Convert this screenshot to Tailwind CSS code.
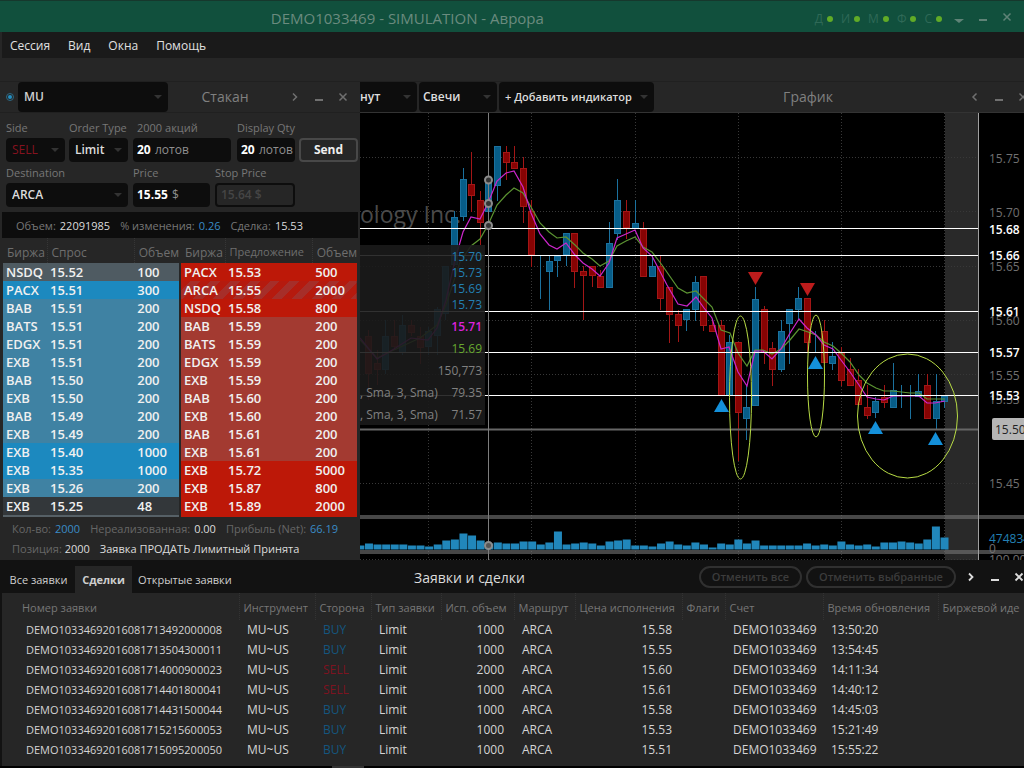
<!DOCTYPE html>
<html lang="ru">
<head>
    <meta charset="UTF-8">
    <meta name="viewport" content="width=device-width, initial-scale=1.0">
    <script src="https://cdn.jsdelivr.net/npm/@tailwindcss/browser@4"></script>
    <title>Аврора</title>
</head>
<body class="flex h-screen min-h-[768px] flex-col overflow-hidden bg-[#262626] font-['Open_Sans','Noto_Sans',sans-serif] text-xs text-[#cfcfcf]">
    <!-- Title bar -->
    <header class="flex h-8 shrink-0 items-center border-t border-[#16382d] bg-[#11503d] pr-3 text-[#527a6c]">
        <h1 class="flex-1 pt-0.5 text-center text-[15px] text-[#6b8b7f]">DEMO1033469 - SIMULATION - Аврора</h1>
        <ul class="flex items-center gap-2 pt-1 pr-3 text-xs text-[#2f6957]">
            <li class="flex items-center gap-1">Д<span class="size-1.5 rounded-full bg-[#61ab27]"></span></li>
            <li class="flex items-center gap-1">И<span class="size-1.5 rounded-full bg-[#61ab27]"></span></li>
            <li class="flex items-center gap-1">М<span class="size-1.5 rounded-full bg-[#61ab27]"></span></li>
            <li class="flex items-center gap-1">Ф<span class="size-1.5 rounded-full bg-[#61ab27]"></span></li>
            <li class="flex items-center gap-1">С<span class="size-1.5 rounded-full bg-[#61ab27]"></span></li>
        </ul>
        <div class="flex items-center gap-3.5 text-[#5f8377]">
            <button aria-label="Меню"><svg class="h-3 w-2.5" viewBox="0 0 10 12" fill="currentColor"><path d="M0 8h10l-5 4z"/></svg></button>
            <button aria-label="Свернуть"><svg class="h-3 w-2.5" viewBox="0 0 10 12" fill="currentColor"><path d="M1 8h8v2H1z"/></svg></button>
            <button aria-label="Закрыть"><svg class="h-3 w-2.5" viewBox="0 0 10 12" fill="none" stroke="currentColor" stroke-width="1.5"><path d="M1.500 2.500l7 7m0-7l-7 7"/></svg></button>
        </div>
    </header>

    <!-- Menu -->
    <nav class="ml-0.5 flex h-[26px] shrink-0 items-center gap-[18px] bg-[#1a1a1a] px-2 pt-0.5 text-xs text-[#e0e0e0]">
        <a href="#">Сессия</a>
        <a href="#">Вид</a>
        <a href="#">Окна</a>
        <a href="#">Помощь</a>
    </nav>
    <div class="h-6 shrink-0 border-b border-[#202020]"></div>

    <main class="flex min-h-0 flex-1">
        <!-- Order book -->
        <section class="flex w-[360px] shrink-0 flex-col">
            <div class="flex h-[31px] shrink-0 items-center border-b border-[#202020] pr-3 pl-1.5">
                <svg class="mr-1 size-2" viewBox="0 0 8 8"><circle cx="4" cy="4" r="3.500" fill="none" stroke="#2d6680"/><circle cx="4" cy="4" r="2" fill="#2390c4"/></svg>
                <label class="flex h-[30px] w-[150px] items-center rounded bg-[#0d0d0d] px-1.5">
                    <select aria-label="Инструмент" class="min-w-0 flex-1 appearance-none bg-transparent font-semibold outline-none"><option>MU</option></select>
                    <svg class="h-1 w-2" viewBox="0 0 8 4" fill="#333"><path d="M0 0h8L4 4z"/></svg>
                </label>
                <h2 class="flex-1 pr-2 text-center text-sm text-[#808080]">Стакан</h2>
                <div class="flex gap-3.5 text-[#707070]">
                    <button aria-label="Вперед"><svg class="size-2.5" viewBox="0 0 10 10" fill="none" stroke="currentColor" stroke-width="1.5"><path d="M3 1.500L6.500 5 3 8.500"/></svg></button>
                    <button aria-label="Свернуть"><svg class="size-2.5" viewBox="0 0 10 10" fill="currentColor"><path d="M1 7h8v2H1z"/></svg></button>
                    <button aria-label="Закрыть"><svg class="size-2.5" viewBox="0 0 10 10" fill="none" stroke="currentColor" stroke-width="1.5"><path d="M1.500 1.500l7 7m0-7l-7 7"/></svg></button>
                </div>
            </div>

            <form class="flex shrink-0 flex-col pt-[7px] pr-0.5 pl-1.5 text-[11px] leading-4 text-[#777]">
                <div class="flex items-end">
                    <label class="w-[63px] shrink-0">Side
                        <span class="mt-0.5 flex h-6 w-[59px] items-center rounded bg-[#0d0d0d] px-1.5">
                            <select class="min-w-0 flex-1 appearance-none text-xs text-[#85121f] outline-none"><option>SELL</option></select>
                            <svg class="h-1 w-2" viewBox="0 0 8 4" fill="#333"><path d="M0 0h8L4 4z"/></svg>
                        </span>
                    </label>
                    <label class="w-16 shrink-0">Order Type
                        <span class="mt-0.5 flex h-6 w-[59px] items-center rounded bg-[#0d0d0d] px-1.5">
                            <select class="min-w-0 flex-1 appearance-none text-xs font-semibold text-[#dcdcdc] outline-none"><option>Limit</option></select>
                            <svg class="h-1 w-2" viewBox="0 0 8 4" fill="#333"><path d="M0 0h8L4 4z"/></svg>
                        </span>
                    </label>
                    <label class="w-[104px] shrink-0"><span class="pl-1">2000 акций</span>
                        <span class="mt-0.5 flex h-6 w-[98px] items-center gap-1 rounded bg-[#0d0d0d] px-1 text-xs text-[#909090]">
                            <input value="20" class="w-3.5 font-bold text-white outline-none">лотов
                        </span>
                    </label>
                    <label class="w-[62px] shrink-0">Display Qty
                        <span class="mt-0.5 flex h-6 w-[58px] items-center gap-1 overflow-hidden rounded bg-[#0d0d0d] pl-1 text-xs text-[#909090]">
                            <input value="20" class="w-3.5 shrink-0 font-bold text-white outline-none">лотов
                        </span>
                    </label>
                    <button type="button" class="h-6 w-[59px] shrink-0 rounded border-2 border-[#484848] text-xs font-bold text-[#eee]">Send</button>
                </div>
                <div class="flex items-end pt-[3px]">
                    <label class="w-[127px]">Destination
                        <span class="mt-0.5 flex h-6 w-[122px] items-center rounded bg-[#0d0d0d] px-1.5">
                            <select class="min-w-0 flex-1 appearance-none text-xs font-semibold text-[#dcdcdc] outline-none"><option>ARCA</option></select>
                            <svg class="h-1 w-2" viewBox="0 0 8 4" fill="#333"><path d="M0 0h8L4 4z"/></svg>
                        </span>
                    </label>
                    <label class="w-[82px]">Price
                        <span class="mt-0.5 flex h-6 w-[77px] items-center gap-1 rounded bg-[#0d0d0d] px-1 text-xs text-[#909090]">
                            <input value="15.55" class="w-[31px] font-bold text-white outline-none">$
                        </span>
                    </label>
                    <label>Stop Price
                        <span class="mt-0.5 flex h-6 w-20 items-center rounded border-2 border-[#0d0d0d] px-1">
                            <input disabled value="15.64 $" class="w-full text-xs font-semibold text-[#454545]">
                        </span>
                    </label>
                </div>
            </form>

            <dl class="mx-0.5 mt-[5px] flex h-[26px] shrink-0 items-center gap-2.5 bg-[#0d0d0d] pt-0.5 pl-3.5 text-[11px] text-[#777]">
                <div class="flex gap-1"><dt>Объем:</dt><dd class="text-[#dcdcdc]">22091985</dd></div>
                <div class="flex gap-1"><dt>% изменения:</dt><dd class="text-[#3a8cc6]">0.26</dd></div>
                <div class="flex gap-1"><dt>Сделка:</dt><dd class="text-[#dcdcdc]">15.53</dd></div>
            </dl>

            <div class="flex gap-0.5 px-[3px]">
                <table class="h-fit flex-1 table-fixed border-b-2 border-[#566066] text-[13px] font-semibold text-[#f0f0f0]">
                    <thead class="h-[25px] text-left text-xs text-[#6e6e6e]">
                        <tr>
                            <th class="w-11 overflow-hidden pt-1 pl-1 font-normal whitespace-nowrap">Биржа</th>
                            <th class="border-l border-dotted border-[#363636] pt-1 pl-1 font-normal">Спрос</th>
                            <th class="w-11 overflow-hidden border-l border-dotted border-[#363636] pt-1 pl-1 font-normal whitespace-nowrap">Объем</th>
                        </tr>
                    </thead>
                    <tbody id="bids"></tbody>
                </table>
                <table class="h-fit flex-1 table-fixed border-b-2 border-[#bd1808] text-[13px] font-semibold text-[#f0f0f0]">
                    <thead class="h-[25px] text-left text-xs text-[#6e6e6e]">
                        <tr>
                            <th class="w-11 overflow-hidden pt-1 pl-1 font-normal whitespace-nowrap">Биржа</th>
                            <th class="border-l border-dotted border-[#363636] pt-1 pl-1 text-[11px] font-normal">Предложение</th>
                            <th class="w-11 overflow-hidden border-l border-dotted border-[#363636] pt-1 pl-1 font-normal whitespace-nowrap">Объем</th>
                        </tr>
                    </thead>
                    <tbody id="asks"></tbody>
                </table>
            </div>

            <div class="pt-0.5 pl-3 text-[11px] leading-5 whitespace-nowrap text-[#666]">
                <dl class="flex gap-2.5">
                    <div class="flex gap-1"><dt>Кол-во:</dt><dd class="text-[#3a8cc6]">2000</dd></div>
                    <div class="flex gap-1"><dt>Нереализованная:</dt><dd class="text-[#dcdcdc]">0.00</dd></div>
                    <div class="flex gap-1"><dt>Прибыль (Net):</dt><dd class="text-[#3a8cc6]">66.19</dd></div>
                </dl>
                <div class="flex gap-2.5">
                    <p>Позиция: <span class="text-[#dcdcdc]">2000</span></p>
                    <p class="text-[#dcdcdc]">Заявка ПРОДАТЬ Лимитный Принята</p>
                </div>
            </div>
        </section>

        <!-- Chart -->
        <section class="flex min-w-0 flex-1 flex-col bg-black">
            <div class="flex h-[31px] shrink-0 items-center gap-0.5 overflow-hidden border-b border-[#333] bg-[#262626] font-semibold text-[#dcdcdc]">
                <label class="flex h-[30px] w-[57px] shrink-0 items-center rounded-r bg-[#0d0d0d] pr-1.5">
                    <select aria-label="Интервал" class="min-w-0 flex-1 appearance-none outline-none"><option>нут</option></select>
                    <svg class="h-1 w-2" viewBox="0 0 8 4" fill="#333"><path d="M0 0h8L4 4z"/></svg>
                </label>
                <label class="flex h-[30px] w-[78px] shrink-0 items-center rounded bg-[#0d0d0d] pr-1.5 pl-1">
                    <select aria-label="Тип графика" class="min-w-0 flex-1 appearance-none outline-none"><option>Свечи</option></select>
                    <svg class="h-1 w-2" viewBox="0 0 8 4" fill="#333"><path d="M0 0h8L4 4z"/></svg>
                </label>
                <button class="flex h-[30px] w-[155px] shrink-0 items-center justify-between rounded bg-[#0d0d0d] px-1.5 text-[11px] whitespace-nowrap">
                    + Добавить индикатор
                    <svg class="h-1 w-2" viewBox="0 0 8 4" fill="#333"><path d="M0 0h8L4 4z"/></svg>
                </button>
                <h2 class="flex-1 pr-2 text-center text-sm font-normal text-[#808080]">График</h2>
                <div class="-mr-1 flex shrink-0 gap-3.5 text-[#707070]">
                    <button aria-label="Назад"><svg class="size-2.5" viewBox="0 0 10 10" fill="none" stroke="currentColor" stroke-width="1.5"><path d="M6.500 1.500L3 5l3.500 3.500"/></svg></button>
                    <button aria-label="Свернуть"><svg class="size-2.5" viewBox="0 0 10 10" fill="currentColor"><path d="M1 7h8v2H1z"/></svg></button>
                    <button aria-label="Закрыть"><svg class="size-2.5" viewBox="0 0 10 10" fill="none" stroke="currentColor" stroke-width="1.5"><path d="M1.500 1.500l7 7m0-7l-7 7"/></svg></button>
                </div>
            </div>
            <svg class="block min-h-0 w-full flex-1" viewBox="360 113 664 447" preserveAspectRatio="xMinYMin slice" font-size="12">
                <rect x="945" y="113" width="34" height="447" fill="#292929"/>
                <g id="grid" stroke="#383838" stroke-dasharray="1 2"></g>
                <text x="360" y="223" font-size="23" fill="#4a4a4a">ology Inc.</text>
                <g id="candles"></g>
                <g fill="none" stroke-width="1.2">
                    <path stroke="#5c9432" d="M360 340L377 358L394 350L420 338L437 325L446 305L460 262L471 246L480 239L488 225L497 205L506 195L514 188L523 193L531 207L540 223L549 232L557 238L566 237L575 245L583 253L592 259L600 266L609 261L617 246L626 241L635 237L643 247L652 252L662 265L678 288L687 293L696 291L712 307L721 330L730 333L738 353L747 366L755 350L763 350L772 354L781 349L790 340L799 329L808 332L816 335L824 342L833 346L841 353L850 362L859 375L867 383L876 388L884 391L893 391L910 393L919 393L927 399L945 399"/>
                    <path stroke="#cc26cc" d="M360 338L377 359L394 349L411 338L428 340L437 328L446 300L455 260L463 232L471 217L480 219L488 203L497 181L506 173L514 171L523 187L531 213L540 234L549 245L557 249L566 243L575 255L583 263L592 269L600 276L609 263L617 238L626 234L635 230L643 248L652 256L667 285L678 304L687 306L696 297L704 308L712 318L721 349L729 347L738 372L747 386L755 351L763 351L772 359L781 349L790 333L799 319L807 328L816 335L824 345L833 349L841 360L850 372L859 385L867 397L876 399L884 400L893 396L919 396L927 403L935 403L945 401"/>
                </g>
                <path stroke="#666" stroke-width="2" d="M360 429.500H979"/>
                <path stroke="#fff" d="M360 228.500H979M360 255.500H979M360 311.500H979M360 352.500H979M360 395.500H979"/>
                <path stroke="#7d7d7d" d="M488.500 113V560"/>
                <g fill="#333" stroke="#8c8c8c" stroke-width="2">
                    <circle cx="488.500" cy="180" r="3.500"/>
                    <circle cx="488.500" cy="203.500" r="3.500"/>
                    <circle cx="488.500" cy="225.500" r="3.500"/>
                </g>
                <!-- Values under the cursor -->
                <rect x="360" y="245" width="125" height="180" fill="#1b1b1b" fill-opacity=".9"/>
                <g text-anchor="end" fill="#2380b4">
                    <text x="482" y="261">15.70</text>
                    <text x="482" y="277">15.73</text>
                    <text x="482" y="293">15.69</text>
                    <text x="482" y="309">15.73</text>
                    <text x="482" y="331" fill="#dd22dd" font-weight="600">15.71</text>
                    <text x="482" y="353" fill="#67a82f">15.69</text>
                    <text x="482" y="375" fill="#808080">150,773</text>
                    <text x="482" y="397" fill="#808080">79.35</text>
                    <text x="482" y="419" fill="#808080">71.57</text>
                </g>
                <g fill="#808080">
                    <text x="360" y="397">, Sma, 3, Sma)</text>
                    <text x="360" y="419">, Sma, 3, Sma)</text>
                </g>
                <g fill="#1490da">
                    <path d="M714 412h15l-7.500-13z"/>
                    <path d="M808 369h15l-7.500-13z"/>
                    <path d="M868 434h15l-7.500-13z"/>
                    <path d="M928 445h15l-7.500-13z"/>
                </g>
                <g fill="#bd1c1c">
                    <path d="M748 272h15l-7.500 13z"/>
                    <path d="M800 283h15l-7.500 13z"/>
                </g>
                <g fill="none" stroke="#b8dc45">
                    <ellipse cx="740.500" cy="397.500" rx="11" ry="81.500"/>
                    <ellipse cx="816" cy="376" rx="8.500" ry="61"/>
                    <ellipse cx="907.500" cy="416" rx="50" ry="62"/>
                </g>
                <g id="volume" fill="#2187bb"></g>
                <circle cx="488.500" cy="545.500" r="3.500" fill="#555" stroke="#8c8c8c" stroke-width="2"/>
                <path fill="#777" fill-opacity=".6" d="M360 515h664v4H360zM360 550h664v4H360z"/>
                <path stroke="#a0a0a0" d="M978.500 113V560"/>
                <!-- Price axis -->
                <g fill="#707070">
                    <text x="989" y="163">15.75</text>
                    <text x="989" y="217">15.70</text>
                    <text x="989" y="271">15.65</text>
                    <text x="989" y="325">15.60</text>
                    <text x="989" y="380">15.55</text>
                    <text x="989" y="404">15.53</text>
                    <text x="989" y="488">15.45</text>
                    <text x="989" y="543" fill="#2380b4">474834</text>
                    <text x="989" y="553">0</text>
                    <text x="989" y="564">100.00</text>
                </g>
                <g fill="#fff" font-weight="600">
                    <text x="989" y="234">15.68</text>
                    <text x="989" y="260">15.66</text>
                    <text x="989" y="316">15.61</text>
                    <text x="989" y="357">15.57</text>
                    <text x="989" y="400">15.53</text>
                </g>
                <rect x="992" y="418" width="36" height="22" rx="2" fill="#b5b5b5"/>
                <text x="995" y="434" fill="#222">15.50</text>
            </svg>
        </section>
    </main>

    <!-- Orders and trades -->
    <section class="relative shrink-0 border-b-2 border-black bg-[#121212] pl-0.5">
        <div class="flex h-[33px] items-end overflow-hidden">
            <div class="flex w-[300px] shrink-0">
                <button class="h-[27px] w-[73px] pt-0.5 text-[11px] whitespace-nowrap">Все заявки</button>
                <button class="h-[27px] w-[57px] bg-[#262626] pt-0.5 text-[11px] font-bold">Сделки</button>
                <button class="h-[27px] px-1.5 pt-0.5 text-[11px] whitespace-nowrap">Открытые заявки</button>
            </div>
            <h2 class="h-[27px] flex-1 pt-0.5 pr-1.5 pl-10 text-center text-sm whitespace-nowrap text-[#dcdcdc]">Заявки и сделки</h2>
            <div class="flex h-[33px] shrink-0 items-center gap-1 pl-24">
                <button disabled class="h-[22px] w-[103px] rounded-full border-2 border-[#303030] text-[11px] leading-none font-semibold text-[#3c3c3c]">Отменить все</button>
                <button disabled class="h-[22px] w-[150px] rounded-full border-2 border-[#303030] text-[11px] leading-none font-semibold whitespace-nowrap text-[#3c3c3c]">Отменить выбранные</button>
                <div class="flex gap-3.5 pl-1.5 text-[#dcdcdc]">
                    <button aria-label="Вперед"><svg class="size-2.5" viewBox="0 0 10 10" fill="none" stroke="currentColor" stroke-width="1.8"><path d="M3 1.500L6.500 5 3 8.500"/></svg></button>
                    <button aria-label="Свернуть"><svg class="size-2.5" viewBox="0 0 10 10" fill="currentColor"><path d="M1 7h8v2H1z"/></svg></button>
                    <button aria-label="Закрыть"><svg class="size-2.5" viewBox="0 0 10 10" fill="none" stroke="currentColor" stroke-width="1.8"><path d="M1.500 1.500l7 7m0-7l-7 7"/></svg></button>
                </div>
            </div>
        </div>
        <div class="overflow-hidden bg-[#262626] pr-1 pb-1.5 pl-4">
            <table class="w-full table-fixed whitespace-nowrap">
                <colgroup>
                    <col class="w-[221px]"><col class="w-[76px]"><col class="w-[56px]"><col class="w-[70px]">
                    <col class="w-[73px]"><col class="w-[61px]"><col class="w-[107px]"><col class="w-[43px]">
                    <col class="w-[98px]"><col class="w-[115px]"><col>
                </colgroup>
                <thead class="h-[27px] text-left text-[11px] text-[#777]">
                    <tr id="trade-head"></tr>
                </thead>
                <tbody id="trades" class="text-xs text-[#d4d4d4]"></tbody>
            </table>
        </div>
        <div class="absolute -bottom-0.5 left-[332px] h-0.5 w-8 bg-[#333]"></div>
    </section>

    <script>
        // Order book
        const levels = {
            grey: 'bg-[#4f5b62]',
            dark: 'bg-[#33373a]',
            blue: 'bg-[#3f82a3]',
            brightBlue: 'bg-[#1c89bf]',
            red: 'bg-[#a33a31]',
            brightRed: 'bg-[#bd1808]',
            own: 'bg-[repeating-linear-gradient(135deg,#b51a0e_0_7px,#a62e29_7px_14px)]'
        };
        const bids = [
            ['NSDQ', '15.52', 100, 'grey'], ['PACX', '15.51', 300, 'brightBlue'], ['BAB', '15.51', 200, 'blue'],
            ['BATS', '15.51', 200, 'blue'], ['EDGX', '15.51', 200, 'blue'], ['EXB', '15.51', 200, 'blue'],
            ['BAB', '15.50', 200, 'blue'], ['EXB', '15.50', 200, 'blue'], ['BAB', '15.49', 200, 'blue'],
            ['EXB', '15.49', 200, 'blue'], ['EXB', '15.40', 1000, 'brightBlue'], ['EXB', '15.35', 1000, 'brightBlue'],
            ['EXB', '15.26', 200, 'blue'], ['EXB', '15.25', 48, 'dark']
        ];
        const asks = [
            ['PACX', '15.53', 500, 'brightRed'], ['ARCA', '15.55', 2000, 'own'], ['NSDQ', '15.58', 800, 'brightRed'],
            ['BAB', '15.59', 200, 'red'], ['BATS', '15.59', 200, 'red'], ['EDGX', '15.59', 200, 'red'],
            ['EXB', '15.59', 200, 'red'], ['BAB', '15.60', 200, 'red'], ['EXB', '15.60', 200, 'red'],
            ['BAB', '15.61', 200, 'red'], ['EXB', '15.61', 200, 'red'], ['EXB', '15.72', 5000, 'brightRed'],
            ['EXB', '15.87', 800, 'brightRed'], ['EXB', '15.89', 2000, 'brightRed']
        ];
        const bookRow = ([venue, price, size, level]) => `
            <tr class="h-[18px] leading-[18px] ${levels[level]}">
                <td class="pl-[3px]">${venue}</td><td class="pl-[3px]">${price}</td><td class="pl-[3px]">${size}</td>
            </tr>`;
        document.getElementById('bids').innerHTML = bids.map(bookRow).join('');
        document.getElementById('asks').innerHTML = asks.map(bookRow).join('');

        // Trades
        const heads = ['Номер заявки', 'Инструмент', 'Сторона', 'Тип заявки', 'Исп. объем', 'Маршрут',
            'Цена исполнения', 'Флаги', 'Счет', 'Время обновления', 'Биржевой идентификатор'];
        document.getElementById('trade-head').innerHTML = heads.map((h, i) =>
            `<th class="overflow-hidden pt-1 pl-1 font-normal ${i ? 'border-l border-dotted border-[#333]' : ''}">${h}</th>`).join('');

        const trades = [
            ['DEMO10334692016081713492000008', 'BUY', 1000, '15.58', '13:50:20'],
            ['DEMO10334692016081713504300011', 'BUY', 1000, '15.55', '13:54:45'],
            ['DEMO10334692016081714000900023', 'SELL', 2000, '15.60', '14:11:34'],
            ['DEMO10334692016081714401800041', 'SELL', 1000, '15.61', '14:40:12'],
            ['DEMO10334692016081714431500044', 'BUY', 1000, '15.58', '14:45:03'],
            ['DEMO10334692016081715215600053', 'BUY', 1000, '15.53', '15:21:49'],
            ['DEMO10334692016081715095200050', 'BUY', 1000, '15.51', '15:55:22']
        ];
        document.getElementById('trades').innerHTML = trades.map(([id, side, qty, price, time]) => `
            <tr class="h-5 leading-5">
                <td class="pl-2 text-[11px]">${id}</td><td class="pl-2">MU~US</td>
                <td class="pl-2 ${side === 'BUY' ? 'text-[#14567f]' : 'text-[#7d1320]'}">${side}</td>
                <td class="pl-2">Limit</td><td class="pr-2.5 text-right">${qty}</td><td class="pl-2">ARCA</td>
                <td class="pr-2.5 text-right">${price}</td><td></td><td class="pl-2">DEMO1033469</td>
                <td class="pl-2">${time}</td><td></td>
            </tr>`).join('');

        // Candles: x, high, body top, body bottom, low, rising
        const candles = [
            [368, 330, 336, 374, 400, 0], [377, 350, 363, 370, 385, 0], [385, 320, 336, 370, 374, 1],
            [394, 320, 336, 347, 350, 0], [402, 315, 325, 353, 355, 1], [411, 320, 325, 333, 336, 0],
            [420, 327, 336, 348, 364, 0], [428, 327, 331, 347, 355, 1], [437, 307, 309, 336, 355, 1],
            [445, 266, 266, 314, 320, 1], [454, 211, 217, 265, 266, 1], [463, 168, 179, 217, 221, 1],
            [471, 152, 184, 196, 212, 0], [480, 191, 200, 223, 245, 0], [488, 175, 182, 212, 226, 1],
            [497, 146, 146, 186, 201, 1], [506, 146, 152, 163, 180, 0], [514, 146, 162, 169, 169, 0],
            [523, 157, 168, 207, 223, 0], [531, 200, 211, 255, 267, 0], [540, 256, 266, 267, 299, 1],
            [549, 256, 261, 272, 310, 1], [557, 255, 256, 261, 277, 1], [566, 233, 233, 255, 266, 1],
            [574, 233, 233, 272, 288, 0], [583, 266, 271, 276, 320, 0], [592, 266, 266, 276, 287, 0],
            [600, 270, 276, 288, 288, 0], [609, 222, 243, 288, 288, 1], [617, 179, 200, 234, 240, 1],
            [626, 200, 211, 228, 239, 0], [635, 200, 223, 229, 229, 1], [643, 222, 229, 277, 277, 0],
            [652, 256, 266, 277, 277, 1], [660, 256, 266, 299, 310, 0], [669, 287, 287, 315, 343, 0],
            [678, 310, 314, 326, 342, 0], [686, 309, 309, 320, 331, 1], [695, 276, 282, 310, 321, 1],
            [703, 276, 276, 326, 331, 0], [712, 319, 325, 332, 332, 0], [721, 320, 325, 396, 396, 0],
            [729, 335, 342, 396, 396, 1], [738, 342, 342, 413, 461, 0], [746, 386, 407, 419, 440, 1],
            [755, 287, 299, 406, 406, 1], [764, 306, 309, 353, 364, 0], [772, 342, 348, 370, 386, 0],
            [781, 320, 331, 370, 372, 1], [789, 309, 309, 324, 364, 1], [798, 287, 298, 310, 320, 1],
            [807, 298, 298, 343, 353, 0], [815, 331, 342, 343, 353, 1], [824, 320, 331, 363, 363, 0],
            [832, 342, 356, 364, 370, 1], [841, 347, 353, 381, 386, 0], [850, 358, 369, 386, 386, 0],
            [858, 369, 380, 405, 405, 0], [867, 385, 407, 416, 419, 0], [875, 397, 401, 413, 418, 1],
            [884, 385, 397, 403, 408, 0], [893, 363, 390, 408, 408, 1], [901, 385, 396, 397, 408, 1],
            [910, 385, 396, 397, 419, 1], [918, 374, 391, 397, 397, 1], [927, 374, 385, 419, 419, 0],
            [936, 374, 401, 419, 430, 1], [944, 396, 396, 402, 408, 1]
        ];
        document.getElementById('candles').innerHTML = candles.map(([x, high, top, bottom, low, up]) => `
            <g stroke="${up ? '#1b719e' : '#a31616'}" fill="${up ? '#075d88' : '#870303'}">
                <path d="M${x + 0.5} ${high}V${low}"/>
                <rect x="${x - 2.5}" y="${top + 0.5}" width="6" height="${Math.max(bottom - top - 1, 0)}"/>
            </g>`).join('');

        const cols = [429, 532, 636, 739, 842, 945], rows = [158, 212, 267, 321, 375, 484, 560];
        document.getElementById('grid').innerHTML =
            cols.map(x => `<path d="M${x - 0.5} 113V560"/>`).join('') +
            rows.map(y => `<path d="M360 ${y - 0.5}H979"/>`).join('');

        // Volume, one bar for each candle
        const volume = [4, 6, 5, 5, 5, 5, 4, 4, 3, 5, 9, 10, 16, 14, 9, 6, 7, 6, 6, 8, 8, 5, 7, 18, 5, 6, 7, 6, 4, 8, 9, 10,
            4, 4, 3, 6, 8, 5, 4, 7, 5, 2, 6, 5, 10, 6, 9, 4, 4, 4, 4, 4, 6, 4, 5, 4, 8, 5, 4, 5, 3, 7, 7, 8, 7, 6, 10, 23, 12];
        document.getElementById('volume').innerHTML = volume.map((h, i) => {
            const x = 944.5 - 8.59 * (volume.length - 1 - i);
            return `<rect x="${x - 4}" y="${549.5 - h}" width="8" height="${h}"/>`;
        }).join('');
    </script>
</body>
</html>
